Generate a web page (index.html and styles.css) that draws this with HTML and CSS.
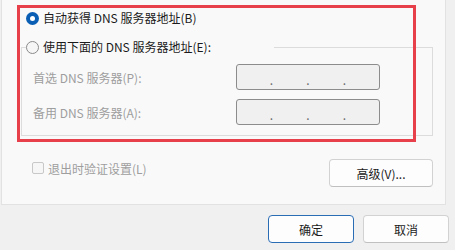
FILE: index.html
```html
<!DOCTYPE html>
<html>
    <head>
        <title>Internet 协议版本 4 (TCP/IPv4) 属性</title>
        <meta charset="UTF-8">
        <link rel="stylesheet" href="styles.css">
    </head>
    <body>
        <div class="dialog">
            <div class="tab">
                <div class="opt opt-auto">
                    <span class="radio checked"></span>
                    <span>自动获得 DNS 服务器地址(B)</span>
                </div>
                <fieldset class="group">
                    <legend class="opt">
                        <span class="radio"></span>
                        <span>使用下面的 DNS 服务器地址(E):</span>
                    </legend>
                    <div class="field">
                        <label>首选 DNS 服务器(P):</label>
                        <div class="ip"><span></span><i>.</i><span></span><i>.</i><span></span><i>.</i><span></span></div>
                    </div>
                    <div class="field">
                        <label>备用 DNS 服务器(A):</label>
                        <div class="ip"><span></span><i>.</i><span></span><i>.</i><span></span><i>.</i><span></span></div>
                    </div>
                </fieldset>
                <div class="extra">
                    <div class="check-row">
                        <span class="check"></span>
                        <span>退出时验证设置(L)</span>
                    </div>
                    <button class="btn btn-adv">高级(V)...</button>
                </div>
            </div>
            <div class="actions">
                <button class="btn btn-default">确定</button>
                <button class="btn">取消</button>
            </div>
            <div class="highlight"></div>
        </div>
    </body>
</html>
```
FILE: styles.css
```css
body{
    margin: 0;
    background-color: #f0f0f0;
    font-family: "Microsoft YaHei UI", "Noto Sans CJK SC", "Noto Sans", sans-serif;
    font-size: 12px;
    color: #1b1b1b;
}
.dialog{
    position: relative;
    width: 455px;
    height: 250px;
    overflow: hidden;
}
.tab{
    box-sizing: border-box;
    width: 445px;
    height: 205px;
    margin-left: 1px;
    padding: 8px 0 0 19px;
    background-color: #f9f9f9;
    border-left: 1px solid #e2e2e2;
    border-right: 1px solid #e2e2e2;
    border-bottom: 1px solid #e2e2e2;
}
.opt{
    display: flex;
    align-items: center;
    gap: 4px;
    height: 20px;
    line-height: 20px;
}
.opt-auto{
    margin-left: 5px;
}
.radio{
    box-sizing: border-box;
    width: 13px;
    height: 13px;
    border-radius: 50%;
    border: 1px solid #8a8a8a;
    background-color: #f6f6f6;
    display: flex;
    align-items: center;
    justify-content: center;
}
.radio.checked{
    border: none;
    background-color: #0a5fb4;
}
.radio.checked::after{
    content: "";
    width: 5px;
    height: 5px;
    border-radius: 50%;
    background-color: #ffffff;
}
.group{
    box-sizing: border-box;
    width: 412px;
    margin: 9px 0 0 0;
    padding: 0 52px 10px 4px;
    border: 1px solid #dcdcdc;
}
.group legend{
    padding: 0;
    width: 248px;
}
.field{
    display: flex;
    align-items: center;
    justify-content: space-between;
    padding-left: 7px;
    margin-top: 9px;
    color: #9e9e9e;
}
.field:first-of-type{
    margin-top: 7px;
}
.ip{
    box-sizing: border-box;
    width: 144px;
    height: 26px;
    display: flex;
    align-items: center;
    padding-top: 4px;
    background-color: #f0f0f0;
    border: 1px solid #8c8c8c;
    border-radius: 3px;
    color: #6a6a6a;
}
.ip span{
    flex: 1;
}
.ip i{
    font-style: normal;
    width: 4px;
    text-align: center;
}
.extra{
    display: flex;
    justify-content: space-between;
    align-items: flex-start;
    width: 412px;
    margin-top: 22px;
}
.check-row{
    display: flex;
    align-items: center;
    gap: 4px;
    height: 20px;
    margin-left: 11px;
    color: #9e9e9e;
}
.check{
    box-sizing: border-box;
    width: 12px;
    height: 12px;
    border: 1px solid #c8c8c8;
    border-radius: 2px;
    background-color: #f6f6f6;
}
.btn{
    box-sizing: border-box;
    height: 28px;
    width: 86px;
    padding: 0;
    font-family: inherit;
    font-size: 12px;
    color: #1b1b1b;
    background-color: #fdfdfd;
    border: 1px solid #d2d2d2;
    border-bottom-color: #c0c0c0;
    border-radius: 4px;
}
.btn-adv{
    width: 104px;
    margin-top: 1px;
}
.btn-default{
    border: 1px solid #2a6db5;
}
.actions{
    display: flex;
    justify-content: flex-end;
    gap: 9px;
    padding: 10px 6px 0 0;
}
.highlight{
    position: absolute;
    left: 17px;
    top: 5px;
    width: 399px;
    height: 137px;
    box-sizing: border-box;
    border: 3px solid #e7404a;
}
```
